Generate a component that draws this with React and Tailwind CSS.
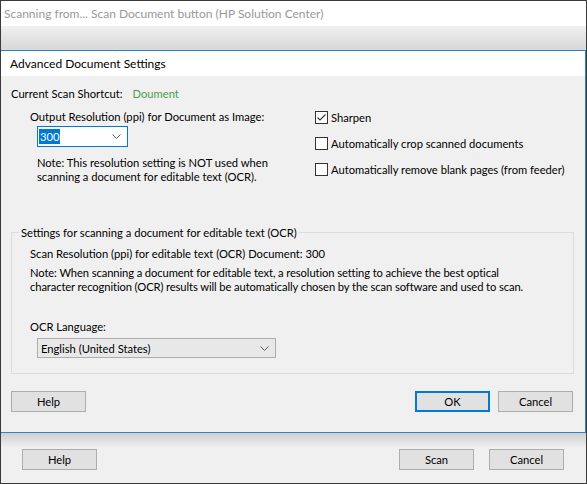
import React from 'react';

const font = { fontFamily: 'Lato, "Noto Sans", "Liberation Sans", sans-serif' };

function Chevron() {
  return (
    <svg width="9" height="5" viewBox="0 0 9 5" className="shrink-0">
      <path d="M0.5 0.5 L4.5 4.5 L8.5 0.5" fill="none" stroke="#5a5a5a" strokeWidth="1" />
    </svg>
  );
}

function Checkbox({ checked, label }) {
  return (
    <div className="flex h-[16px] items-center whitespace-nowrap">
      <div className="flex h-[13px] w-[13px] shrink-0 items-center justify-center border border-[#333] bg-white">
        {checked && (
          <svg width="11" height="11" viewBox="0 0 11 11">
            <path d="M1.5 5.5 L4 8 L9.5 2.5" fill="none" stroke="#333" strokeWidth="1.1" />
          </svg>
        )}
      </div>
      <span className="ml-[3px]">{label}</span>
    </div>
  );
}

function WinButton({ children, primary }) {
  return (
    <button
      type="button"
      className={
        'flex h-[21px] w-[75px] items-center justify-center bg-[#e1e1e1] text-black ' +
        (primary ? 'border-2 border-[#0078d7]' : 'border border-[#adadad]')
      }
    >
      {children}
    </button>
  );
}

export default function App() {
  return (
    <div
      style={font}
      className="flex h-[484px] w-[587px] flex-col overflow-hidden whitespace-nowrap border border-[#3a3a3a] bg-[#f0f0f0] text-[11.2px] leading-[15px] text-black"
    >
      {/* background window title */}
      <div className="flex h-[25px] shrink-0 items-center bg-white pl-[3px] text-[12px] text-[#999]">
        Scanning from... Scan Document button (HP Solution Center)
      </div>
      <div className="h-[24px] shrink-0 bg-gradient-to-b from-[#f0f0f0] to-[#d8d8d8]" />

      {/* dialog */}
      <div className="-ml-px flex h-[383px] w-[586px] shrink-0 flex-col border border-[#2a86cc] bg-[#f0f0f0]">
        <div className="flex h-[25px] shrink-0 items-center bg-white pl-[9px] text-[12px]">
          Advanced Document Settings
        </div>

        <div className="flex flex-1 flex-col">
          <div className="h-[149px] shrink-0 pl-[10px] pt-[10px]">
            <div className="flex">
              <span>Current Scan Shortcut:</span>
              <span className="ml-[10px] text-[#4a9e4a]">Doument</span>
            </div>
            <div className="mt-[8px] flex">
              <div className="ml-[19px] w-[266px]">
                <div>Output Resolution (ppi) for Document as Image:</div>
                <div className="ml-[7px] mt-[2px] flex h-[21px] w-[91px] items-center justify-between border border-[#0078d7] bg-white pl-[1px] pr-[6px]">
                  <span className="bg-[#0078d7] px-px leading-[15px] text-white">300</span>
                  <Chevron />
                </div>
                <div className="ml-[7px] mt-[9px] leading-[14px]">
                  Note: This resolution setting is NOT used when
                  <br />
                  scanning a document for editable text (OCR).
                </div>
              </div>
              <div className="ml-[19px] flex flex-col gap-[10px]">
                <Checkbox checked label="Sharpen" />
                <Checkbox label="Automatically crop scanned documents" />
                <Checkbox label="Automatically remove blank pages (from feeder)" />
              </div>
            </div>
          </div>

          <fieldset className="ml-[10px] w-[563px] border border-[#dcdcdc] pb-[15px] pl-[18px]">
            <legend className="ml-[-11px] pl-[2px] pr-[2px]">
              Settings for scanning a document for editable text (OCR)
            </legend>
            <div className="mt-[6px]">Scan Resolution (ppi) for editable text (OCR) Document: 300</div>
            <div className="mt-[5px] leading-[14px] tracking-[-0.1px]">
              Note: When scanning a document for editable text, a resolution setting to achieve the best optical
              <br />
              character recognition (OCR) results will be automatically chosen by the scan software and used to scan.
            </div>
            <div className="mt-[25px]">OCR Language:</div>
            <div className="ml-[7px] mt-[4px] flex h-[20px] w-[239px] items-center justify-between border border-[#adadad] bg-[#e8e8e8] pl-[3px] pr-[6px]">
              <span>English (United States)</span>
              <Chevron />
            </div>
          </fieldset>

          <div className="mt-[17px] flex">
            <div className="ml-[10px]">
              <WinButton>Help</WinButton>
            </div>
            <div className="ml-auto mr-[12px] flex gap-[8px]">
              <WinButton primary>OK</WinButton>
              <WinButton>Cancel</WinButton>
            </div>
          </div>
        </div>
      </div>

      {/* background window footer */}
      <div className="flex flex-1 flex-col bg-gradient-to-b from-[#cfcfcf] via-[#f0f0f0] via-30% to-[#f0f0f0]">
        <div className="mt-[16px] flex">
          <div className="ml-[21px]">
            <WinButton>Help</WinButton>
          </div>
          <div className="ml-auto mr-[22px] flex gap-[15px]">
            <WinButton>Scan</WinButton>
            <WinButton>Cancel</WinButton>
          </div>
        </div>
      </div>
    </div>
  );
}
